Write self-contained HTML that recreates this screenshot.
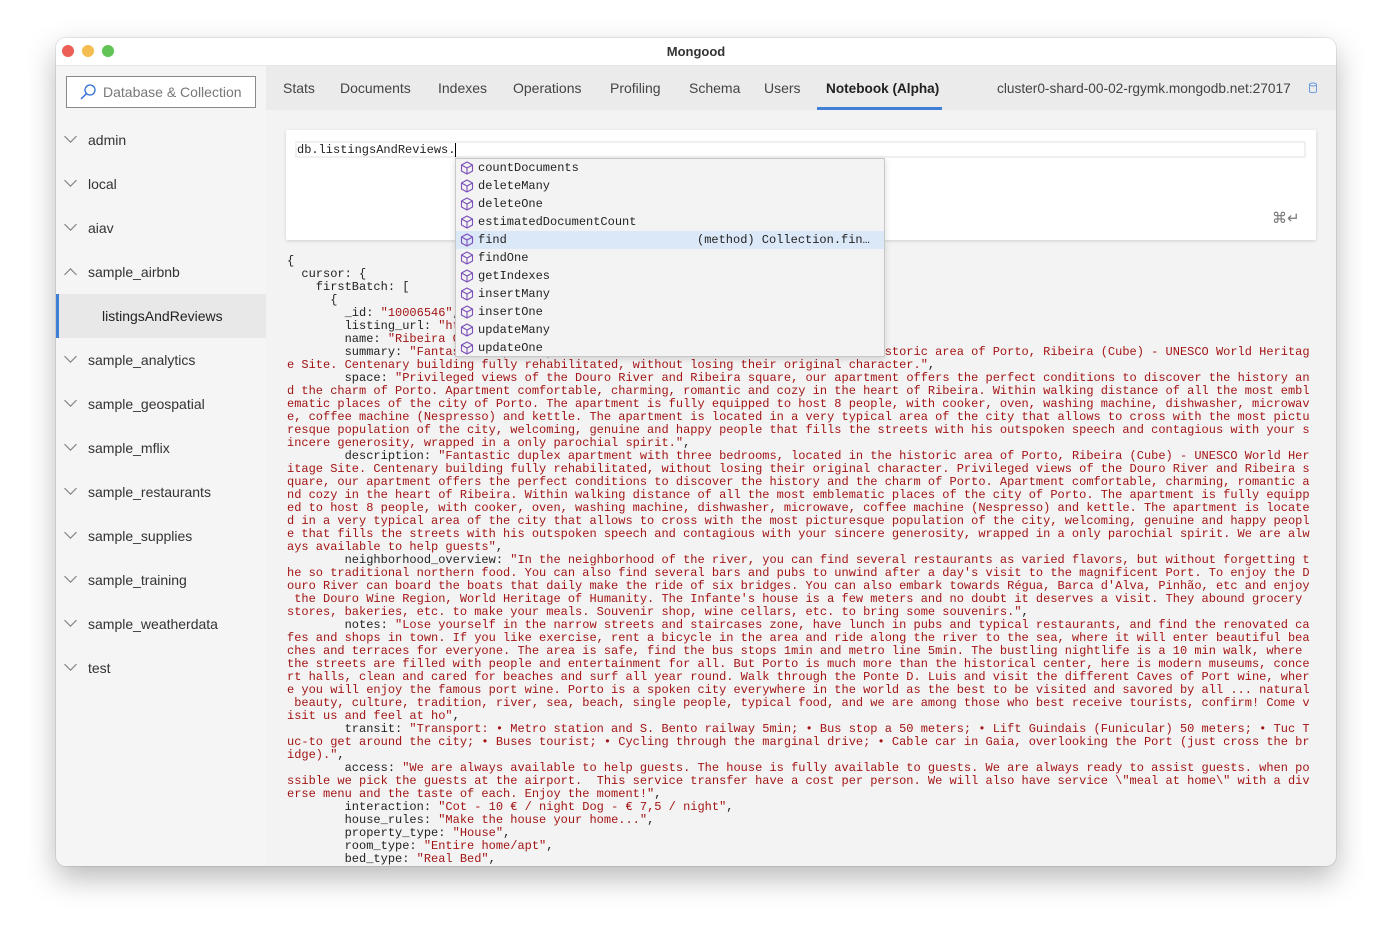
<!DOCTYPE html>
<html><head><meta charset="utf-8"><style>
*{margin:0;padding:0;box-sizing:border-box}
body{width:1392px;height:940px;background:#fff;position:relative;overflow:hidden;font-family:"Liberation Sans",sans-serif}
.win{position:absolute;left:56px;top:38px;width:1280px;height:828px;border-radius:10px;overflow:hidden;background:#f3f3f3;box-shadow:0 12px 30px rgba(0,0,0,.28),0 0 0 1px rgba(0,0,0,.08)}
.title{position:absolute;left:0;top:0;width:1280px;height:28px;background:#fff;border-bottom:1px solid #e6e6e6;text-align:center;font-size:13px;font-weight:bold;color:#333;line-height:27px}
.dot{position:absolute;top:7px;width:12px;height:12px;border-radius:50%}
.side{position:absolute;left:0;top:28px;width:210px;height:800px;background:#f5f5f5}
.search{position:absolute;left:10px;top:10px;width:190px;height:32px;border:1px solid #8a8a8a;background:#fff;font-size:14px;color:#777;padding-left:36px;line-height:31px}
.item{position:absolute;left:0;width:210px;height:44px;font-size:14px;color:#333;line-height:45px;padding-left:32px}
.chev{position:absolute;left:10px;width:9px;height:9px;border-right:1.2px solid #777;border-bottom:1.2px solid #777;transform:rotate(45deg);top:14px}
.chev.up{transform:rotate(-135deg);top:20px}
.tabs{position:absolute;left:210px;top:28px;width:1070px;height:44px;background:#ebebeb}
.tab{position:absolute;top:0;font-size:14px;color:#444;line-height:45px}
pre{position:absolute;left:231px;top:217px;font-family:"Liberation Mono",monospace;font-size:12px;line-height:13px;color:#222}
.s{color:#a31515}
.card{position:absolute;left:230px;top:92px;width:1030px;height:110px;background:#fff;box-shadow:0 1px 3px rgba(0,0,0,.15);border-radius:2px}
.inp{position:absolute;left:9px;top:11px;width:1011px;height:17px;border:2px solid #f0f0f0;font-family:"Liberation Mono",monospace;font-size:12px;line-height:14px;color:#222}
.pop{position:absolute;left:399px;top:120px;width:430px;height:199px;background:#f3f3f3;border:1px solid #c8c8c8;box-shadow:0 2px 6px rgba(0,0,0,.15)}
.row{position:absolute;left:0;width:428px;height:18px;font-family:"Liberation Mono",monospace;font-size:12px;line-height:19px;color:#222;padding-left:22px}
.row svg{position:absolute;left:4px;top:2px}
.sel{background:#dbe8f8}
</style></head><body>
<div class="win">
<div class="title">Mongood
<div class="dot" style="left:6px;background:#ec5f57"></div>
<div class="dot" style="left:26px;background:#f5bd4f"></div>
<div class="dot" style="left:46px;background:#5fc454"></div>
</div>
<div class="side">
<div class="search"><svg style="position:absolute;left:12px;top:6px" width="18" height="18" viewBox="0 0 18 18"><circle cx="11" cy="7" r="5" fill="none" stroke="#2e6fd8" stroke-width="1.3"/><path d="M7.3 10.7L2 16" stroke="#2e6fd8" stroke-width="1.4"/></svg>Database &amp; Collection</div>
<div class="item" style="top:52px"><span class="chev"></span>admin</div>
<div class="item" style="top:96px"><span class="chev"></span>local</div>
<div class="item" style="top:140px"><span class="chev"></span>aiav</div>
<div class="item" style="top:184px"><span class="chev up"></span>sample_airbnb</div>
<div class="item" style="top:228px;background:#e8e8e8;padding-left:43px;border-left:3px solid #3f7fd6;color:#222">listingsAndReviews</div>
<div class="item" style="top:272px"><span class="chev"></span>sample_analytics</div>
<div class="item" style="top:316px"><span class="chev"></span>sample_geospatial</div>
<div class="item" style="top:360px"><span class="chev"></span>sample_mflix</div>
<div class="item" style="top:404px"><span class="chev"></span>sample_restaurants</div>
<div class="item" style="top:448px"><span class="chev"></span>sample_supplies</div>
<div class="item" style="top:492px"><span class="chev"></span>sample_training</div>
<div class="item" style="top:536px"><span class="chev"></span>sample_weatherdata</div>
<div class="item" style="top:580px"><span class="chev"></span>test</div>
</div>
<div class="tabs">
<div class="tab" style="left:17px">Stats</div>
<div class="tab" style="left:74px">Documents</div>
<div class="tab" style="left:172px">Indexes</div>
<div class="tab" style="left:247px">Operations</div>
<div class="tab" style="left:344px">Profiling</div>
<div class="tab" style="left:423px">Schema</div>
<div class="tab" style="left:498px">Users</div>
<div class="tab" style="left:560px;color:#222;font-weight:bold;font-size:13.6px">Notebook (Alpha)</div>
<div style="position:absolute;left:551px;top:41px;width:125px;height:3px;background:#3f7fd6"></div>
<div class="tab" style="left:731px;font-size:13.7px">cluster0-shard-00-02-rgymk.mongodb.net:27017</div>
<svg style="position:absolute;left:1042px;top:16px" width="10" height="12" viewBox="0 0 10 12"><ellipse cx="5" cy="2.5" rx="3.5" ry="1.5" fill="none" stroke="#6a9be0"/><path d="M1.5 2.5V9.5C1.5 11 8.5 11 8.5 9.5V2.5" fill="none" stroke="#6a9be0"/></svg>
</div>
<div class="card">
<div class="inp">db.listingsAndReviews.<span style="border-left:1.5px solid #000"></span></div>
<div style="position:absolute;left:986px;top:79px;font-size:15px;color:#777">⌘↵</div>
</div>
<pre>{
  cursor: {
    firstBatch: [
      {
        _id: <span class="s">"10006546"</span>,
        listing_url: <span class="s">"https://www.airbnb.com/rooms/10006546"</span>,
        name: <span class="s">"Ribeira Charming Duplex"</span>,
        summary: <span class="s">"Fantastic duplex apartment with three bedrooms, located in the historic area of Porto, Ribeira (Cube) - UNESCO World Heritag
e Site. Centenary building fully rehabilitated, without losing their original character."</span>,
        space: <span class="s">"Privileged views of the Douro River and Ribeira square, our apartment offers the perfect conditions to discover the history an
d the charm of Porto. Apartment comfortable, charming, romantic and cozy in the heart of Ribeira. Within walking distance of all the most embl
ematic places of the city of Porto. The apartment is fully equipped to host 8 people, with cooker, oven, washing machine, dishwasher, microwav
e, coffee machine (Nespresso) and kettle. The apartment is located in a very typical area of the city that allows to cross with the most pictu
resque population of the city, welcoming, genuine and happy people that fills the streets with his outspoken speech and contagious with your s
incere generosity, wrapped in a only parochial spirit."</span>,
        description: <span class="s">"Fantastic duplex apartment with three bedrooms, located in the historic area of Porto, Ribeira (Cube) - UNESCO World Her
itage Site. Centenary building fully rehabilitated, without losing their original character. Privileged views of the Douro River and Ribeira s
quare, our apartment offers the perfect conditions to discover the history and the charm of Porto. Apartment comfortable, charming, romantic a
nd cozy in the heart of Ribeira. Within walking distance of all the most emblematic places of the city of Porto. The apartment is fully equipp
ed to host 8 people, with cooker, oven, washing machine, dishwasher, microwave, coffee machine (Nespresso) and kettle. The apartment is locate
d in a very typical area of the city that allows to cross with the most picturesque population of the city, welcoming, genuine and happy peopl
e that fills the streets with his outspoken speech and contagious with your sincere generosity, wrapped in a only parochial spirit. We are alw
ays available to help guests"</span>,
        neighborhood_overview: <span class="s">"In the neighborhood of the river, you can find several restaurants as varied flavors, but without forgetting t
he so traditional northern food. You can also find several bars and pubs to unwind after a day's visit to the magnificent Port. To enjoy the D
ouro River can board the boats that daily make the ride of six bridges. You can also embark towards Régua, Barca d'Alva, Pinhão, etc and enjoy
 the Douro Wine Region, World Heritage of Humanity. The Infante's house is a few meters and no doubt it deserves a visit. They abound grocery
stores, bakeries, etc. to make your meals. Souvenir shop, wine cellars, etc. to bring some souvenirs."</span>,
        notes: <span class="s">"Lose yourself in the narrow streets and staircases zone, have lunch in pubs and typical restaurants, and find the renovated ca
fes and shops in town. If you like exercise, rent a bicycle in the area and ride along the river to the sea, where it will enter beautiful bea
ches and terraces for everyone. The area is safe, find the bus stops 1min and metro line 5min. The bustling nightlife is a 10 min walk, where
the streets are filled with people and entertainment for all. But Porto is much more than the historical center, here is modern museums, conce
rt halls, clean and cared for beaches and surf all year round. Walk through the Ponte D. Luis and visit the different Caves of Port wine, wher
e you will enjoy the famous port wine. Porto is a spoken city everywhere in the world as the best to be visited and savored by all ... natural
 beauty, culture, tradition, river, sea, beach, single people, typical food, and we are among those who best receive tourists, confirm! Come v
isit us and feel at ho"</span>,
        transit: <span class="s">"Transport: • Metro station and S. Bento railway 5min; • Bus stop a 50 meters; • Lift Guindais (Funicular) 50 meters; • Tuc T
uc-to get around the city; • Buses tourist; • Cycling through the marginal drive; • Cable car in Gaia, overlooking the Port (just cross the br
idge)."</span>,
        access: <span class="s">"We are always available to help guests. The house is fully available to guests. We are always ready to assist guests. when po
ssible we pick the guests at the airport.  This service transfer have a cost per person. We will also have service \"meal at home\" with a div
erse menu and the taste of each. Enjoy the moment!"</span>,
        interaction: <span class="s">"Cot - 10 € / night Dog - € 7,5 / night"</span>,
        house_rules: <span class="s">"Make the house your home..."</span>,
        property_type: <span class="s">"House"</span>,
        room_type: <span class="s">"Entire home/apt"</span>,
        bed_type: <span class="s">"Real Bed"</span>,
</pre>
<div class="pop">
<div class="row" style="top:0">CUBEcountDocuments</div>
<div class="row" style="top:18px">CUBEdeleteMany</div>
<div class="row" style="top:36px">CUBEdeleteOne</div>
<div class="row" style="top:54px">CUBEestimatedDocumentCount</div>
<div class="row sel" style="top:72px">CUBEfind<span style="position:absolute;left:241px">(method) Collection.fin…</span></div>
<div class="row" style="top:90px">CUBEfindOne</div>
<div class="row" style="top:108px">CUBEgetIndexes</div>
<div class="row" style="top:126px">CUBEinsertMany</div>
<div class="row" style="top:144px">CUBEinsertOne</div>
<div class="row" style="top:162px">CUBEupdateMany</div>
<div class="row" style="top:180px">CUBEupdateOne</div>
</div>
</div>
<script>
document.querySelectorAll('.row').forEach(r=>{r.innerHTML=r.innerHTML.replace('CUBE','<svg width="14" height="14" viewBox="0 0 14 14"><path d="M7 1L12.5 4V10L7 13L1.5 10V4Z M1.5 4L7 7L12.5 4 M7 7V13" fill="none" stroke="#7b4fb8" stroke-width="1.1" stroke-linejoin="round"/></svg>')});
</script>
</body></html>
